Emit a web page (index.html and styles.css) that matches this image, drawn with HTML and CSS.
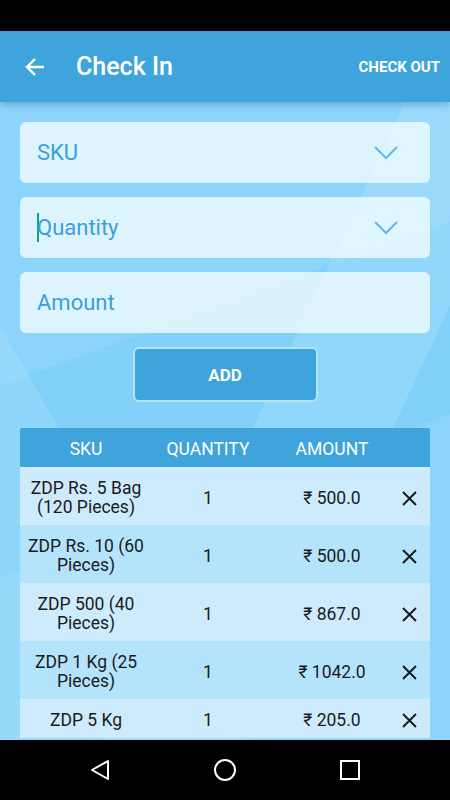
FILE: index.html
```html
<!DOCTYPE html>
<html lang="en">

<head>
    <meta charset="UTF-8">
    <meta name="viewport" content="width=device-width, initial-scale=1.0">
    <title>Check In</title>
    <link rel="stylesheet" href="styles.css">
</head>

<body>
    <div class="status-bar"></div>

    <header class="app-bar">
        <svg class="back" width="22" height="22" viewBox="0 0 22 22">
            <path d="M20 11H3M11 3L3 11L11 19" fill="none" stroke="#fff" stroke-width="2.4" />
        </svg>
        <h1 class="title">Check In</h1>
        <span class="action">CHECK OUT</span>
    </header>

    <main class="content">
        <div class="field">
            <span class="label">SKU</span>
            <svg class="chevron" width="24" height="14" viewBox="0 0 24 14">
                <path d="M1 1L12 12L23 1" fill="none" stroke="#63b8e4" stroke-width="2" />
            </svg>
        </div>
        <div class="field">
            <span class="label"><span class="cursor"></span>Quantity</span>
            <svg class="chevron" width="24" height="14" viewBox="0 0 24 14">
                <path d="M1 1L12 12L23 1" fill="none" stroke="#63b8e4" stroke-width="2" />
            </svg>
        </div>
        <div class="field">
            <span class="label">Amount</span>
        </div>

        <button class="add-btn">ADD</button>

        <div class="table">
            <div class="row head">
                <span>SKU</span>
                <span>QUANTITY</span>
                <span>AMOUNT</span>
                <span></span>
            </div>
            <div class="row">
                <span>ZDP Rs. 5 Bag (120 Pieces)</span>
                <span>1</span>
                <span>₹ 500.0</span>
                <span class="remove"><svg width="15" height="15" viewBox="0 0 15 15"><path d="M1 1L14 14M14 1L1 14" stroke="#1b1b1b" stroke-width="2" /></svg></span>
            </div>
            <div class="row alt">
                <span>ZDP Rs. 10 (60 Pieces)</span>
                <span>1</span>
                <span>₹ 500.0</span>
                <span class="remove"><svg width="15" height="15" viewBox="0 0 15 15"><path d="M1 1L14 14M14 1L1 14" stroke="#1b1b1b" stroke-width="2" /></svg></span>
            </div>
            <div class="row">
                <span>ZDP 500 (40 Pieces)</span>
                <span>1</span>
                <span>₹ 867.0</span>
                <span class="remove"><svg width="15" height="15" viewBox="0 0 15 15"><path d="M1 1L14 14M14 1L1 14" stroke="#1b1b1b" stroke-width="2" /></svg></span>
            </div>
            <div class="row alt">
                <span>ZDP 1 Kg (25 Pieces)</span>
                <span>1</span>
                <span>₹ 1042.0</span>
                <span class="remove"><svg width="15" height="15" viewBox="0 0 15 15"><path d="M1 1L14 14M14 1L1 14" stroke="#1b1b1b" stroke-width="2" /></svg></span>
            </div>
            <div class="row">
                <span>ZDP 5 Kg</span>
                <span>1</span>
                <span>₹ 205.0</span>
                <span class="remove"><svg width="15" height="15" viewBox="0 0 15 15"><path d="M1 1L14 14M14 1L1 14" stroke="#1b1b1b" stroke-width="2" /></svg></span>
            </div>
        </div>
    </main>

    <nav class="nav-bar">
        <svg width="22" height="22" viewBox="0 0 22 22">
            <path d="M19 2L3 11L19 20Z" fill="none" stroke="#fff" stroke-width="2" stroke-linejoin="round" />
        </svg>
        <svg width="24" height="24" viewBox="0 0 24 24">
            <circle cx="12" cy="12" r="10" fill="none" stroke="#fff" stroke-width="2" />
        </svg>
        <svg width="22" height="22" viewBox="0 0 22 22">
            <rect x="2" y="2" width="18" height="18" fill="none" stroke="#fff" stroke-width="2" />
        </svg>
    </nav>
</body>

</html>
```

FILE: styles.css
```css
body {
    margin: 0;
    width: 450px;
    height: 800px;
    display: flex;
    flex-direction: column;
    overflow: hidden;
    font-family: Roboto, "Noto Sans", sans-serif;
    background-color: #8cd4fb;
    background-image:
        linear-gradient(115deg, rgba(255, 255, 255, 0) 55%, rgba(255, 255, 255, 0.12) 55%, rgba(255, 255, 255, 0.12) 72%, rgba(255, 255, 255, 0) 72%),
        linear-gradient(60deg, rgba(255, 255, 255, 0.1) 30%, rgba(255, 255, 255, 0) 30%),
        linear-gradient(160deg, rgba(120, 205, 250, 0) 40%, rgba(120, 205, 250, 0.5) 40%, rgba(120, 205, 250, 0.5) 60%, rgba(120, 205, 250, 0) 60%);
}

.status-bar {
    height: 31px;
    flex-shrink: 0;
    background-color: #000;
}

.app-bar {
    height: 71px;
    flex-shrink: 0;
    display: flex;
    align-items: center;
    padding: 0 10px 0 24px;
    background-color: #3ea4db;
    box-shadow: 0 3px 6px rgba(30, 100, 150, 0.35);
    position: relative;
    z-index: 1;
}

.back {
    display: block;
}

.title {
    flex: 1;
    margin: 0 0 0 30px;
    color: #fff;
    font-size: 25px;
    font-weight: 500;
}

.action {
    color: #fff;
    font-size: 15px;
    font-weight: 700;
}

.content {
    flex: 1;
    overflow: hidden;
    padding: 20px 20px 0;
    display: flex;
    flex-direction: column;
}

.field {
    height: 61px;
    flex-shrink: 0;
    box-sizing: border-box;
    display: flex;
    align-items: center;
    justify-content: space-between;
    padding: 0 32px 0 17px;
    margin-bottom: 14px;
    border-radius: 6px;
    background-color: rgba(235, 249, 255, 0.85);
}

.label {
    display: flex;
    align-items: center;
    color: #3aa0d9;
    font-size: 22px;
}

.cursor {
    width: 2px;
    height: 29px;
    margin-right: -2px;
    background-color: #14a08f;
}

.add-btn {
    align-self: center;
    width: 185px;
    height: 55px;
    flex-shrink: 0;
    margin: 0 0 26px;
    border: 2px solid #b6e3fa;
    border-radius: 6px;
    background-color: #3ea4db;
    color: #fff;
    font-family: Roboto, sans-serif;
    font-size: 17px;
    font-weight: 700;
}

.table {
    display: flex;
    flex-direction: column;
    flex-shrink: 0;
}

.row {
    display: grid;
    grid-template-columns: 132px 112px 136px 1fr;
    align-items: center;
    padding: 12px 0 8px;
    background-color: #cdebfd;
    color: #1b1b1b;
    font-size: 17.5px;
    line-height: 19px;
    text-align: center;
}

.row>span {
    padding: 0 2px;
}

.row.alt {
    background-color: #b4e3fc;
}

.row.head {
    padding: 12px 0 8px;
    border-radius: 2px 2px 0 0;
    background-color: #3ea4db;
    color: #fff;
    font-size: 17.5px;
}

.remove {
    display: flex;
    justify-content: flex-start;
}

.nav-bar {
    height: 60px;
    flex-shrink: 0;
    display: grid;
    grid-template-columns: repeat(3, 125px);
    justify-content: center;
    justify-items: center;
    align-items: center;
    background-color: #000;
}
```
